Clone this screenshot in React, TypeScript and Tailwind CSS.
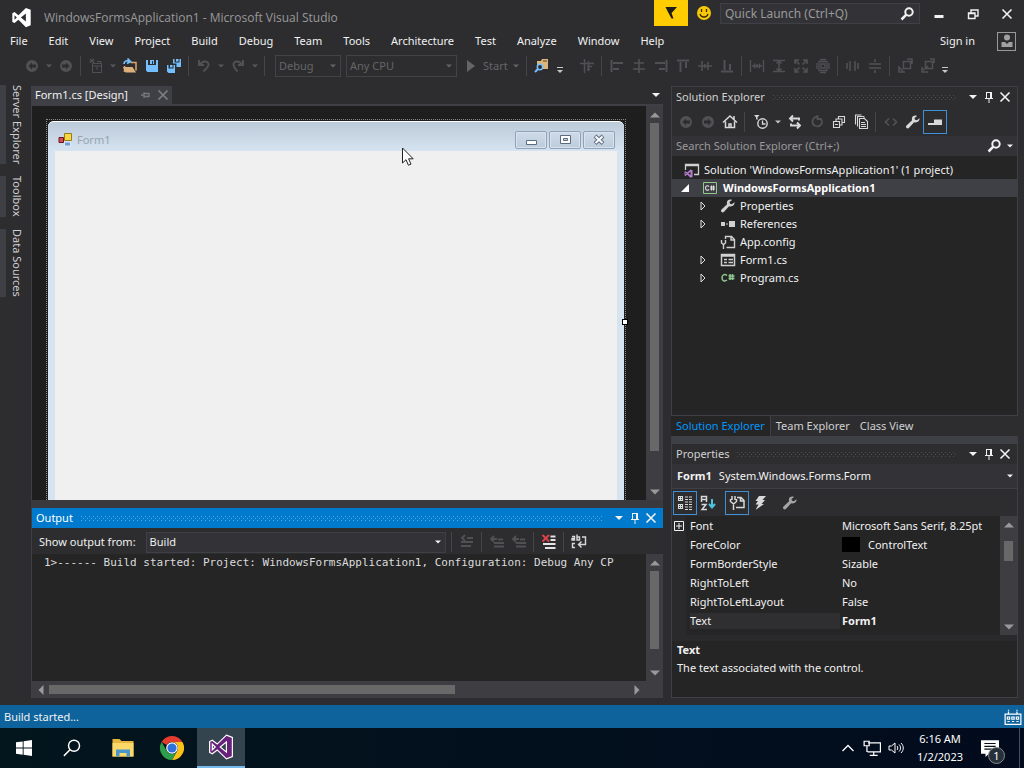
import { useState } from "react";
import type { ReactNode } from "react";
import clsx from "clsx";

type IconProps = { children: ReactNode; className?: string; box?: number };

function Icon({ children, className = "size-4", box = 16 }: IconProps) {
  return (
    <svg viewBox={`0 0 ${box} ${box}`} className={clsx("shrink-0", className)} fill="none" stroke="none" aria-hidden="true">
      {children}
    </svg>
  );
}

const VsMark = () => (
  <path fillRule="evenodd" d="M17 1l5.500 2.200v17.600L17 23 8.500 14.700 4 18.300l-2.500-1.300V7L4 5.700l4.500 3.600zM17 7.300L11.300 12l5.700 4.700zM4 9.300v5.400L6.700 12z" />
);

const Caret = ({ className = "size-2" }: { className?: string }) => (
  <Icon box={8} className={className}><path d="M0 2h8L4 6z" fill="currentColor" /></Icon>
);
const CloseGlyph = () => (
  <Icon className="size-4"><path d="M3.500 3.500l9 9m0-9l-9 9" stroke="currentColor" strokeWidth="1.600" /></Icon>
);
const PinGlyph = () => (
  <Icon><path d="M5.500 3v6m5-6v6M5 3.500h6M4 9.500h8M8 10v4M9.500 3v6" stroke="currentColor" /></Icon>
);
const WrenchGlyph = () => (
  <path d="M14.500 4.300l-2.600 1.900-1.900-.4-.5-1.900L12 2c-2-.9-4.300-.2-5 1.700-.3.900-.2 1.700.1 2.500L1.500 11.500c-.8.900-.6 2 .1 2.600.8.700 1.800.5 2.500-.3l5-5.600c2.900 1 5.900-1.200 5.400-3.900z" fill="currentColor" />
);
const SearchGlyph = () => (
  <Icon><circle cx="10" cy="6" r="3.700" stroke="currentColor" strokeWidth="2" /><path d="M7.300 8.700L2.500 13.500" stroke="currentColor" strokeWidth="2.500" /></Icon>
);

const icons = {
  back: <path fillRule="evenodd" d="M8 2a6 6 0 100 12A6 6 0 008 2zM8 4.500v2h4v3H8v2L4.500 8z" fill="currentColor" />,
  forward: <path fillRule="evenodd" d="M8 2a6 6 0 110 12A6 6 0 018 2zM8 4.500v2H4v3h4v2L11.500 8z" fill="currentColor" />,
  newProject: <path d="M4.500 5.500h9v9h-9zM4.500 8h9M4 .5v4M1.500 3h5M2 1l4 4m0-4L2 5M9 3.500h4v2M9 8v4" stroke="currentColor" />,
  open: (
    <>
      <path d="M8.500 4.500h5.500v8M2.500 8v6" stroke="#d9a867" strokeWidth="1.500" />
      <path d="M1 9h9.500l3.500 5.500H3.500z" fill="#dcb07a" />
      <path d="M2 6c0-3 3-4 6-2.500M5.500 .5l3 3-3.500 2" stroke="#75bfff" strokeWidth="1.700" />
    </>
  ),
  save: <path fillRule="evenodd" d="M2 2h2v5h8V2h2v12H3.500L2 12.500zM6 2h4v4H9V3H8v3H6z" fill="#75bfff" />,
  saveAll: (
    <>
      <path fillRule="evenodd" d="M7 1h1.500v3.500h5V1H15v8h-4.500V5.500H7zM10 1h2.500v2.500H10z" fill="#75bfff" />
      <path fillRule="evenodd" d="M1 7h1.500v3.500h5V7H9v8H2.500L1 13.500zM4 7h2.500v2.500H4z" fill="#75bfff" />
    </>
  ),
  undo: <path d="M3 2v5h5M4 6.500C7 2 13 3 12.500 7c-.3 2.500-3 4-5 6.500" stroke="currentColor" strokeWidth="2" />,
  redo: <path d="M13 2v5H8M12 6.500C9 2 3 3 3.500 7c.3 2.500 2 4 4 6.500" stroke="currentColor" strokeWidth="2" />,
  find: (
    <>
      <path d="M3 3h4l1-2h6v10H3z" fill="#dcb67a" />
      <path d="M9 3h4" stroke="#5a4420" />
      <circle cx="6" cy="9" r="2.700" fill="#2d2d30" stroke="#75bfff" strokeWidth="1.500" />
      <path d="M4 11l-3 3" stroke="#75bfff" strokeWidth="2" />
    </>
  ),
  snap: <path d="M1 5.500h14M5.500 1v14M8 8.500h5M8 11.500h3M9.500 3v10" stroke="currentColor" strokeWidth="1.500" />,
  alignLeft: <path d="M2.500 2v12M4 5h10M4 11h6" stroke="currentColor" strokeWidth="2" />,
  alignCenter: <path d="M8 1v14M3 5h10M2 11h12" stroke="currentColor" strokeWidth="1.600" />,
  alignRight: <path d="M13.500 2v12M2 5h10M6 11h6" stroke="currentColor" strokeWidth="2" />,
  alignTop: <path d="M2 2.500h12M5.500 4v10M11 4v6" stroke="currentColor" strokeWidth="2" />,
  alignMiddle: <path d="M1 8h14M5 3v10M11 4v8M8 6v4" stroke="currentColor" strokeWidth="1.600" />,
  alignBottom: <path d="M2 13.500h12M5.500 2v10M11 6v6" stroke="currentColor" strokeWidth="2" />,
  sameWidth: <path d="M1.500 2v12m13-12v12M3 8h10M5.500 5.500v5m5-5v5M8 6v4" stroke="currentColor" strokeWidth="1.400" />,
  sameHeight: <path d="M2 2.500h12m-12 11h12M8 3v10M5.500 5.500L8 3l2.500 2.500m-5 5L8 13l2.500-2.500" stroke="currentColor" strokeWidth="1.500" />,
  sameSize: <path d="M2 6V2h4m4 0h4v4m0 4v4h-4m-4 0H2v-4M3 3l3.500 3.500M13 3L9.500 6.500M3 13l3.500-3.500M13 13L9.500 9.500" stroke="currentColor" strokeWidth="1.600" />,
  sizeGrid: <path d="M4 3.500h8v9H4zM6 6h4v4H6zM2 5v6m12-6v6M5 1.500h6m-6 13h6" stroke="currentColor" strokeWidth="1.300" />,
  hSpace: <path d="M2 5v6m3-8v10m5-10v10m3-8v6" stroke="currentColor" strokeWidth="1.600" />,
  vSpace: <path d="M2 6h12m-12 4h12M8 1v3m0 8v3" stroke="currentColor" strokeWidth="1.600" />,
  toFront: <path d="M6.500 3.500h7v7h-7zM2 8v6h6M10 1h5v5M3 10l3 3" stroke="currentColor" strokeWidth="1.500" />,
  toBack: <path d="M6.500 3.500h7v7h-7zM3 9v5h6M9 8L4 12M11 1h4v4" stroke="currentColor" strokeWidth="1.500" />,
  home: <path d="M1 8.500L8 2l7 6.500M3.500 7.500v6h9v-6M12 2v3M7 14v-4h2v4" stroke="currentColor" strokeWidth="1.500" />,
  pending: (
    <>
      <circle cx="9.500" cy="9.500" r="4.700" stroke="currentColor" strokeWidth="1.400" />
      <path d="M9.500 6.500v3.500h3" stroke="currentColor" strokeWidth="1.300" />
      <path d="M1 1h5.500L4.500 3.200V6L3 5V3.200z" fill="currentColor" />
    </>
  ),
  sync: <path d="M6 1.500L3 4.500l3 3M3.500 4.500H12v2M10 8.500l3 3-3 3M12.500 11.500H4v-2" stroke="currentColor" strokeWidth="1.900" />,
  refresh: <path d="M9 3c-3-1-6 2-5.500 5.500S9 13.500 11.500 11 13 6 11 4.500M8.500 1v4h4" stroke="currentColor" strokeWidth="1.800" />,
  collapse: <path d="M2.500 7.500h6v6h-6zM4 10.500h3M5 7V5h6v6H9M7.500 4.500v-2h6v6h-2" stroke="currentColor" strokeWidth="1.100" />,
  showAll: <path d="M6.500 4.500h5l3 3v7h-8zM8 8.500h4m-4 2h5m-5 2h5M4.500 12.500v-10h6l1 1M2.500 10.500V1h6" stroke="currentColor" strokeWidth="1.100" />,
  code: <path d="M6 4.500L2.500 8 6 11.500m4-7L13.500 8 10 11.500" stroke="currentColor" strokeWidth="1.700" />,
  wrench: <WrenchGlyph />,
  preview: <path d="M1 9h7v2H1zM7 5.500h8V11H7z" fill="currentColor" />,
  categorized: <path d="M1.500 1.500h4v4h-4zM1.500 9.500h4v4h-4zM2 3.500h3m-1.500-1.500v3M2 11.500h3m-1.500-1.500v3M8 2h3m1 0h3M8 4.500h3m1 0h3M8 7h3m1 0h3M8 9.500h3m1 0h3M8 12h3m1 0h3M8 14.500h3m1 0h3" stroke="currentColor" strokeWidth="1.100" />,
  alphabetical: (
    <>
      <path d="M1.500 7V1.500h5V7M1.500 4.500h5M1.500 9.500H6L2 14.500h5" stroke="currentColor" strokeWidth="1.500" />
      <path d="M12 4v8M9 9l3 3.500L15 9" stroke="#4ec3e0" strokeWidth="2" />
    </>
  ),
  propPages: <path d="M3 1v4m3-4v4M1.500 4v2.500L4.500 9l3-2.500V4M4.500 8v7M8 2.500h4l3 3v7H7M11.500 2.500v3.500H15" stroke="currentColor" strokeWidth="1.500" />,
  events: <path d="M7 1h7l-3.500 4H13L9.500 9H12l-8.500 6 3-5.500H3.500L6 6H3.500z" fill="currentColor" />,
  outFind: <path d="M2 8h12M2 12h10M8 4h6M6 1L3 4l3 3" stroke="currentColor" strokeWidth="2" />,
  outPrev: <path d="M5 9h10M5 12.500h10M9 5.500h5M5 2L2 5l3 3M2 5h6" stroke="currentColor" strokeWidth="1.800" />,
  clear: (
    <>
      <path d="M9.500 2.500h5M9.500 6h5M2 10h12.500M4 14h10.500" stroke="#e4e4e4" strokeWidth="2" />
      <path d="M1.500 1l6.500 6.500m0-6.500L1.500 7.500" stroke="#e0404a" strokeWidth="1.800" />
    </>
  ),
  wrap: <path d="M1 2.500h2.500V6H1V4.500h2.500M6 .5V6h2.500V3H6M4 9.500H1.500v4H4M11 3h3.500v7.500H8M10.500 7.500l-3 3 3 3" stroke="currentColor" strokeWidth="1.400" />,
};

type IconName = keyof typeof icons;

function ToolButton({ name, label, tone = "dim", active }: { name: IconName; label: string; tone?: "dim" | "lit"; active?: boolean }) {
  return (
    <button
      aria-label={label}
      className={clsx(
        "flex h-[22px] w-[22px] shrink-0 items-center justify-center",
        tone === "dim" ? "text-[#515154]" : "text-[#d8d8d8]",
        active && "outline outline-[#3f8fd8]"
      )}
    >
      <Icon>{icons[name]}</Icon>
    </button>
  );
}

const Sep = () => <div className="mr-1 ml-[3px] h-5 w-px shrink-0 border-l border-[#46464a]" />;
const SmallCaret = ({ lit }: { lit?: boolean }) => (
  <button aria-label="More options" className={clsx("flex w-3 shrink-0 justify-center", lit ? "text-[#c0c0c0]" : "text-[#59595c]")}>
    <Caret className="size-[6px]" />
  </button>
);
const Overflow = () => (
  <button aria-label="Toolbar options" className="mt-2 flex w-[14px] shrink-0 justify-center text-[#c8c8c8]">
    <Icon box={8} className="size-2"><path d="M1 1.500h6" stroke="currentColor" /><path d="M1 4h6L4 7z" fill="currentColor" /></Icon>
  </button>
);

function DropDown({ label, value, className }: { label: string; value: string; className: string }) {
  return (
    <div className={clsx("relative flex shrink-0 items-center border", className)}>
      <select aria-label={label} className="h-full w-full appearance-none bg-transparent pl-[3px] outline-none">
        <option>{value}</option>
      </select>
      <span className="pointer-events-none absolute right-1"><Caret className="size-[6px]" /></span>
    </div>
  );
}

function Grip({ blue }: { blue?: boolean }) {
  return (
    <div
      className={clsx(
        "h-[5px] flex-1 [mask-image:conic-gradient(from_0deg_at_1px_1px,transparent_75%,#000_0),conic-gradient(from_0deg_at_1px_1px,transparent_75%,#000_0)] [mask-position:0_0,2px_2px] [mask-size:4px_4px]",
        blue ? "bg-[#59a8de]" : "bg-[#4a4a4f]"
      )}
    />
  );
}

function PanelHeader({ title, blue }: { title: string; blue?: boolean }) {
  return (
    <div className={clsx("flex h-5 shrink-0 items-center gap-2 pr-1 pl-1", blue ? "bg-[#007acc] text-white" : "text-[#d0d0d0]")}>
      <h2>{title}</h2>
      <Grip blue={blue} />
      <div className="flex items-center text-[#f1f1f1]">
        <button aria-label={`${title} window position`} className="flex w-4 justify-center"><Caret /></button>
        <button aria-label={`Auto hide ${title}`} className="flex w-4 justify-center"><PinGlyph /></button>
        <button aria-label={`Close ${title}`} className="flex w-4 justify-center"><CloseGlyph /></button>
      </div>
    </div>
  );
}

function VScroll({ thumb, className }: { thumb: string; className?: string }) {
  return (
    <div className={clsx("flex w-[17px] shrink-0 flex-col items-center bg-[#3e3e42] text-[#999]", className)}>
      <div className="flex h-[17px] items-center"><Caret className="size-[10px] rotate-180" /></div>
      <div className="flex min-h-0 w-full flex-1 flex-col items-center">
        <div className={clsx("w-[9px] bg-[#686868]", thumb)} />
      </div>
      <div className="flex h-[17px] items-center"><Caret className="size-[10px]" /></div>
    </div>
  );
}

const menus = ["File", "Edit", "View", "Project", "Build", "Debug", "Team", "Tools", "Architecture", "Test", "Analyze", "Window", "Help"];

function TitleBar() {
  return (
    <header className="flex h-[30px] shrink-0 items-start">
      <div className="flex flex-1 items-center gap-3 pt-[7px] pl-[11px]">
        <Icon box={24} className="size-[21px] text-white"><g fill="currentColor"><VsMark /></g></Icon>
        <h1 className="font-['Open_Sans','Noto_Sans',sans-serif] text-xs text-[#999]">WindowsFormsApplication1 - Microsoft Visual Studio</h1>
      </div>
      <button aria-label="Notifications" className="flex h-[26px] w-[34px] items-center justify-center bg-[#ffcc00] text-[#1b1b1b]">
        <Icon><path d="M2.500 2H14l-4 4.500-1.500 1.500 2 5.500h-2L5.500 8z" fill="currentColor" /></Icon>
      </button>
      <button aria-label="Send feedback" className="flex h-[26px] w-[32px] items-center justify-center">
        <Icon>
          <circle cx="8" cy="8" r="7" fill="#f8c808" />
          <path d="M4 9c1 4 7 4 8 0M5.500 4v3m5-3v3" stroke="#3a2d00" strokeWidth="1.300" />
        </Icon>
      </button>
      <div className="mt-[3px] flex h-[21px] w-[200px] items-center border border-[#3f3f46] bg-[#333337] px-1 text-[#f1f1f1]">
        <input aria-label="Quick Launch" placeholder="Quick Launch (Ctrl+Q)" className="w-0 flex-1 bg-transparent text-xs outline-none placeholder:text-[#999]" />
        <SearchGlyph />
      </div>
      <div className="ml-[2px] flex h-[28px] text-[#f1f1f1]">
        <button aria-label="Minimize" className="flex w-[34px] items-center justify-center"><Icon><path d="M3.500 9h9v3h-9z" fill="currentColor" /></Icon></button>
        <button aria-label="Restore" className="flex w-[34px] items-center justify-center"><Icon><path d="M3.500 7h6.500v5.500H3.500zM6 6.500V4h7v6h-2.500M3 7.500h7M6 4h7" stroke="currentColor" strokeWidth="1.400" /></Icon></button>
        <button aria-label="Close" className="flex w-[34px] items-center justify-center"><CloseGlyph /></button>
      </div>
    </header>
  );
}

function MenuBar() {
  return (
    <nav className="flex h-[22px] shrink-0 items-center gap-px pr-2">
      {menus.map((m) => (
        <button key={m} className="px-[10px] whitespace-nowrap">{m}</button>
      ))}
      <button className="ml-auto pr-[21px]">Sign in</button>
      <button aria-label="Account" className="flex size-[19px] items-center justify-center border border-[#999] text-[#a0a0a0]">
        <Icon><circle cx="8" cy="4.500" r="3" fill="currentColor" /><path d="M2.500 9H6l2 2 2-2h3.500v5h-11z" fill="currentColor" /></Icon>
      </button>
    </nav>
  );
}

function ToolBar() {
  return (
    <div className="flex h-[27px] shrink-0 items-center pl-[21px]">
      <ToolButton name="back" label="Navigate backward" /><SmallCaret />
      <ToolButton name="forward" label="Navigate forward" /><Sep />
      <ToolButton name="newProject" label="New project" /><SmallCaret />
      <ToolButton name="open" label="Open file" />
      <ToolButton name="save" label="Save" />
      <ToolButton name="saveAll" label="Save all" /><Sep />
      <ToolButton name="undo" label="Undo" /><SmallCaret />
      <ToolButton name="redo" label="Redo" /><SmallCaret /><Sep />
      <DropDown label="Solution configuration" value="Debug" className="ml-[6px] h-[22px] w-[66px] border-[#434346] text-[#656565]" />
      <DropDown label="Solution platform" value="Any CPU" className="ml-[5px] h-[22px] w-[111px] border-[#434346] text-[#656565]" />
      <button className="mr-1 ml-[6px] flex w-[56px] items-center gap-1 text-[#656565]">
        <Icon><path d="M4 2l8 6-8 6z" fill="currentColor" /></Icon>
        Start
        <Caret className="ml-auto size-[6px]" />
      </button>
      <Sep />
      <ToolButton name="find" label="Find in files" /><Overflow />
      <div className="w-[9px] shrink-0" />
      <ToolButton name="snap" label="Align to grid" /><Sep />
      <ToolButton name="alignLeft" label="Align lefts" />
      <ToolButton name="alignCenter" label="Align centers" />
      <ToolButton name="alignRight" label="Align rights" />
      <ToolButton name="alignTop" label="Align tops" />
      <ToolButton name="alignMiddle" label="Align middles" />
      <ToolButton name="alignBottom" label="Align bottoms" /><Sep />
      <ToolButton name="sameWidth" label="Make same width" />
      <ToolButton name="sameHeight" label="Make same height" />
      <ToolButton name="sameSize" label="Make same size" />
      <ToolButton name="sizeGrid" label="Size to grid" /><Sep />
      <ToolButton name="hSpace" label="Make horizontal spacing equal" />
      <ToolButton name="vSpace" label="Make vertical spacing equal" /><Sep />
      <ToolButton name="toFront" label="Bring to front" />
      <ToolButton name="toBack" label="Send to back" /><Overflow />
    </div>
  );
}

function SideRail() {
  return (
    <aside className="flex w-[31px] shrink-0 flex-col gap-3 pt-[6px]">
      {["Server Explorer", "Toolbox", "Data Sources"].map((t) => (
        <button key={t} className="flex w-6 items-center border-l-[6px] border-[#3f3f46] pl-[3px] leading-[14px] text-[#d0d0d0] [writing-mode:vertical-rl]">
          {t}
        </button>
      ))}
    </aside>
  );
}

function FormButton({ label, children }: { label: string; children: ReactNode }) {
  return (
    <button aria-label={label} className="flex h-[18px] w-8 items-center justify-center rounded-[2px] border border-[#8fa3b8] bg-linear-to-b from-[#cfdbe7] to-[#bccbdb] shadow-[inset_0_0_0_1px_#d8e3ee]">
      <Icon>{children}</Icon>
    </button>
  );
}

function Designer() {
  return (
    <section className="flex min-h-0 flex-1 flex-col border-l border-[#3f3f46]">
      <div className="flex h-[18px] shrink-0 items-center">
        <div className="flex h-full items-center bg-[#3f3f46] pl-[3px]">
          <span className="text-[#f1f1f1]">Form1.cs [Design]</span>
          <button aria-label="Pin tab" className="ml-[10px] text-[#77777b]"><Icon><path d="M3 8h3m0-3v6m0-4.500h5v3H6" stroke="currentColor" strokeWidth="1.300" /></Icon></button>
          <button aria-label="Close tab" className="mx-px text-[#808084]"><CloseGlyph /></button>
        </div>
        <button aria-label="Open documents" className="mr-[3px] ml-auto"><Caret /></button>
      </div>
      <div className="h-[2px] shrink-0 bg-[#3f3f46]" />
      <div className="flex min-h-0 flex-1 bg-[#1e1e1e]">
        <div className="relative flex min-w-0 flex-1 overflow-hidden pt-[13px] pr-5 pl-[14px]">
          <div className="relative flex flex-1 border border-b-0 border-dotted border-[#8a8a8a] p-px pb-0">
            <div className="flex flex-1 flex-col rounded-t-md bg-linear-to-r from-[#d6e3f1] via-[#dce8f4] to-[#d6e3f1]">
              <div className="flex h-[30px] shrink-0 items-center rounded-t-md border-t border-white bg-linear-to-b from-[#bccbd9] to-[#d6e3f1] px-[9px] pt-[6px]">
                <Icon>
                  <path d="M7.500 1.500h7v7h-7z" fill="#f5d742" stroke="#9a7a1c" />
                  <path d="M2 5.500h4.500v5H2z" fill="#d0505a" stroke="#6e1518" />
                  <path d="M7.500 10h6v4h-6z" fill="#6f9bd8" stroke="#dfe8f5" />
                </Icon>
                <span className="ml-1 text-[#98a4b0]">Form1</span>
                <div className="ml-auto flex gap-[2px]">
                  <FormButton label="Form minimize"><path d="M3.500 8.500h10v4h-10z" fill="#fff" stroke="#5b6b80" /></FormButton>
                  <FormButton label="Form maximize"><path d="M3.500 3.500h10v8h-10z" fill="#fff" stroke="#5b6b80" /><path d="M6.500 6.500h4v2h-4z" fill="#c5d2e0" stroke="#5b6b80" /></FormButton>
                  <FormButton label="Form close"><path d="M4 4l8 7.500m0-7.500L4 11.500" stroke="#5b6b80" strokeWidth="4" /><path d="M4.500 4.500l7 6.500m0-6.500l-7 6.500" stroke="#fff" strokeWidth="2" /></FormButton>
                </div>
              </div>
              <div className="mx-[7px] flex-1 bg-[#f0f0f0]" />
            </div>
            <span className="absolute top-[199px] -right-[3px] size-[6px] border border-black bg-white" />
            <svg viewBox="0 0 14 20" className="absolute top-[27px] left-[354px] h-5 w-[14px]" aria-hidden="true">
              <path d="M1.500 1v15l3.500-3.300 2.400 5.500 2.600-1.100L7.600 11.800h4.600z" fill="#fff" stroke="#222" />
            </svg>
          </div>
        </div>
        <VScroll thumb="h-full max-h-[328px]" />
      </div>
    </section>
  );
}

function Output() {
  return (
    <section className="flex h-[190px] shrink-0 flex-col border-l border-[#3f3f46]">
      <PanelHeader title="Output" blue />
      <div className="flex h-[26px] shrink-0 items-center pt-[2px]">
        <span className="pr-[10px] pl-[7px] whitespace-nowrap">Show output from:</span>
        <DropDown label="Show output from" value="Build" className="h-[21px] w-[300px] border-[#3f3f46] bg-[#333337] text-[#f1f1f1]" />
        <span className="w-[2px]" />
        <Sep /><ToolButton name="outFind" label="Find message in code" />
        <Sep /><ToolButton name="outPrev" label="Previous message" />
        <ToolButton name="outPrev" label="Next message" />
        <Sep /><ToolButton name="clear" label="Clear all" tone="lit" />
        <Sep /><ToolButton name="wrap" label="Toggle word wrap" tone="lit" />
      </div>
      <div className="flex min-h-0 flex-1 bg-[#252526]">
        <pre className="min-w-0 flex-1 overflow-hidden pl-3 font-['DejaVu_Sans_Mono',monospace] leading-[18px] text-[#dcdcdc]">
          1&gt;------ Build started: Project: WindowsFormsApplication1, Configuration: Debug Any CP
        </pre>
        <VScroll thumb="h-[78px]" />
      </div>
      <div className="flex h-[17px] shrink-0 items-center bg-[#3e3e42] pr-[21px] pl-1 text-[#999]">
        <Caret className="size-[10px] rotate-90" />
        <div className="mx-[3px] flex-1"><div className="h-[9px] w-[70%] bg-[#686868]" /></div>
        <Caret className="size-[10px] -rotate-90" />
      </div>
    </section>
  );
}

const tree: { label: string; icon: ReactNode; arrow?: boolean }[] = [
  { label: "Properties", arrow: true, icon: <WrenchGlyph /> },
  { label: "References", arrow: true, icon: <path d="M1 6h4v4H1zM6 7.500h2v1H6zM9 5h6v6H9z" fill="currentColor" /> },
  { label: "App.config", icon: <path d="M5.500 5V2.500h6l3 3v8h-8M11 2.500v3.500h3.500M1.500 6v3l2 1.500L5.500 9V6M3.500 10v5" stroke="currentColor" strokeWidth="1.400" /> },
  { label: "Form1.cs", arrow: true, icon: <path d="M1.500 2.500h13v11h-13zM2 4h12M4 7.500h3M8.500 7.500H13M4 10.500h3M8.500 10.500H13" stroke="currentColor" strokeWidth="1.500" /> },
  {
    label: "Program.cs",
    arrow: true,
    icon: <path d="M7 5.500C4.500 3.500 2 5 2 7.800S4.500 12 7 10M10 4v6m2.500-6v6M8.500 6h6m-6 2.500h6" stroke="#8fc98f" strokeWidth="1.500" />,
  },
];

function SolutionExplorer() {
  const [tab, setTab] = useState("Solution Explorer");
  return (
    <section className="flex min-h-0 flex-1 flex-col">
      <div className="flex min-h-0 flex-1 flex-col border border-[#3f3f46]">
        <PanelHeader title="Solution Explorer" />
        <div className="flex h-[29px] shrink-0 items-center pl-[3px]">
          <ToolButton name="back" label="Back" />
          <ToolButton name="forward" label="Forward" />
          <ToolButton name="home" label="Home" tone="lit" />
          <Sep />
          <span className="w-px" />
          <ToolButton name="pending" label="Pending changes filter" tone="lit" /><SmallCaret lit />
          <ToolButton name="sync" label="Sync with active document" tone="lit" />
          <ToolButton name="refresh" label="Refresh" />
          <ToolButton name="collapse" label="Collapse all" tone="lit" />
          <ToolButton name="showAll" label="Show all files" tone="lit" />
          <Sep />
          <ToolButton name="code" label="View code" />
          <ToolButton name="wrench" label="Properties" tone="lit" />
          <ToolButton name="preview" label="Preview selected items" tone="lit" active />
        </div>
        <div className="flex h-5 shrink-0 items-center bg-[#333337] pr-1 pl-1">
          <input aria-label="Search Solution Explorer" placeholder="Search Solution Explorer (Ctrl+;)" className="w-0 flex-1 bg-transparent outline-none placeholder:text-[#999]" />
          <SearchGlyph />
          <Caret className="ml-[5px] size-[6px]" />
        </div>
        <ul className="min-h-0 flex-1 bg-[#252526] pt-[5px] leading-[18px]">
          <li className="flex h-[18px] items-center gap-1 pl-[12px] whitespace-nowrap">
            <Icon>
              <path d="M1.500 8V2.500h13v10H10M1 3.500h14" stroke="#d0d0d0" strokeWidth="1.300" />
              <g transform="translate(0 7) scale(.38)" fill="#b57fd0"><VsMark /></g>
            </Icon>
            Solution 'WindowsFormsApplication1' (1 project)
          </li>
          <li className="flex h-[18px] items-center bg-[#3f3f46] pl-[9px] font-bold text-white">
            <Icon box={8} className="mr-[13px] size-2"><path d="M8 0v8H0z" fill="currentColor" /></Icon>
            <Icon className="mr-[5px] size-4">
              <path d="M1.500 2.500h13v11h-13z" stroke="#8fc98f" />
              <path d="M7 6.500C5 5 3.500 6 3.500 8S5 11 7 9.500M9.500 5.500v5m2-5v5M8 7h5m-5 2h5" stroke="#e0e0e0" strokeWidth="1.100" />
            </Icon>
            WindowsFormsApplication1
          </li>
          {tree.map((n) => (
            <li key={n.label} className="flex h-[18px] items-center pl-[26px]">
              <Icon box={10} className="mr-[12px] size-[10px]">{n.arrow && <path d="M3 1l4 4-4 4z" stroke="#e0e0e0" />}</Icon>
              <Icon className="mr-1 size-4 text-[#d0d0d0]">{n.icon}</Icon>
              {n.label}
            </li>
          ))}
        </ul>
      </div>
      <div className="flex h-5 shrink-0">
        {["Solution Explorer", "Team Explorer", "Class View"].map((t) => (
          <button
            key={t}
            onClick={() => setTab(t)}
            className={clsx("px-[5px] whitespace-nowrap", tab === t ? "border-r border-[#3f3f46] bg-[#252526] text-[#0097fb]" : "text-[#d0d0d0]")}
          >
            {t}
          </button>
        ))}
      </div>
    </section>
  );
}

const props = [
  { name: "Font", value: "Microsoft Sans Serif, 8.25pt", expand: true },
  { name: "ForeColor", value: "ControlText", swatch: true },
  { name: "FormBorderStyle", value: "Sizable" },
  { name: "RightToLeft", value: "No" },
  { name: "RightToLeftLayout", value: "False" },
  { name: "Text", value: "Form1", selected: true },
];

function Properties() {
  return (
    <section className="flex h-[255px] shrink-0 flex-col border border-[#3f3f46]">
      <PanelHeader title="Properties" />
      <button className="flex h-[25px] shrink-0 items-center border-b border-[#3f3f46] bg-[#333337] pr-1 pl-[5px]">
        <span className="font-bold">Form1</span>
        <span className="ml-[7px]">System.Windows.Forms.Form</span>
        <Caret className="ml-auto size-[6px]" />
      </button>
      <div className="flex h-[27px] shrink-0 items-center pl-[2px]">
        <ToolButton name="categorized" label="Categorized" tone="lit" active />
        <span className="w-[1px]" />
        <ToolButton name="alphabetical" label="Alphabetical" tone="lit" />
        <span className="w-[7px]" />
        <ToolButton name="propPages" label="Property list" tone="lit" active />
        <span className="w-[1px]" />
        <ToolButton name="events" label="Events" tone="lit" />
        <span className="ml-2 opacity-70"><ToolButton name="wrench" label="Property pages" tone="lit" /></span>
      </div>
      <div className="flex shrink-0 bg-[#252526]">
        <div className="min-w-0 flex-1 border-l-[14px] border-[#2a2a2c] pb-[5px]">
          <table className="-ml-[14px] w-full table-fixed border-collapse">
            <colgroup><col className="w-[168px]" /><col /></colgroup>
            <tbody>
              {props.map((p) => (
                <tr key={p.name} className="h-[19px]">
                  <td className="p-0">
                    <div className="flex items-center">
                      <span className="flex w-[18px] justify-start pl-[2px]">
                        {p.expand && <Icon box={10} className="size-[10px]"><path d="M.5.5h9v9h-9zM2 5h6M5 2v6" stroke="#f1f1f1" /></Icon>}
                      </span>
                      <span className={clsx("flex-1", p.selected && "bg-[#2f2f32]")}>{p.name}</span>
                    </div>
                  </td>
                  <td className="p-0 pl-[2px] whitespace-nowrap">
                    <div className="flex items-center">
                      {p.swatch && <span className="mr-2 h-[15px] w-[18px] bg-black" />}
                      <span className={clsx(p.selected && "font-bold")}>{p.value}</span>
                    </div>
                  </td>
                </tr>
              ))}
            </tbody>
          </table>
        </div>
        <VScroll thumb="mt-2 h-5" />
      </div>
      <div className="min-h-0 flex-1 border-t-[6px] border-[#2a2a2c] bg-[#252526] px-[5px] leading-[18px]">
        <p className="font-bold">Text</p>
        <p>The text associated with the control.</p>
      </div>
    </section>
  );
}

function TaskBar() {
  return (
    <footer className="flex h-10 shrink-0 bg-linear-to-r from-[#03151d] to-[#020b1d] text-white">
      <button aria-label="Start menu" className="flex w-12 items-center justify-center">
        <Icon><path d="M0 2.300L6.700 1.400V7.600H0zM7.600 1.200L16 0v7.600H7.600zM0 8.500h6.700v6.200L0 13.800zM7.600 8.500H16V16l-8.400-1.200z" fill="#fff" /></Icon>
      </button>
      <button aria-label="Search" className="flex w-12 items-center justify-center">
        <Icon className="size-[18px]"><circle cx="9.800" cy="6" r="4.900" stroke="#fff" strokeWidth="1.300" /><path d="M6.200 9.600L.8 15" stroke="#fff" strokeWidth="1.300" /></Icon>
      </button>
      <button aria-label="File Explorer" className="ml-[3px] flex w-12 items-center justify-center">
        <Icon box={24} className="size-6">
          <path d="M1.500 3h7l2 2H22.500v15.500h-21z" fill="#e6b63e" />
          <path d="M1.500 7h21v13.500h-21z" fill="#fbd968" />
          <path d="M5 20.500v-7h14v7h-3.500V17h-7v3.500z" fill="#4a96cc" />
        </Icon>
      </button>
      <button aria-label="Chrome" className="ml-px flex w-12 items-center justify-center">
        <Icon box={24} className="size-6">
          <path d="M1.600 6A12 12 0 0122.400 6H12a6 6 0 00-5.200 3z" fill="#e33b2e" />
          <path d="M22.400 6A12 12 0 0112 24l5.200-9A6 6 0 0012 6z" fill="#fbc116" />
          <path d="M1.600 6l5.200 9A6 6 0 0017.200 15L12 24A12 12 0 011.600 6z" fill="#2c9f48" />
          <circle cx="12" cy="12" r="5.800" fill="#fff" /><circle cx="12" cy="12" r="4.600" fill="#2f72de" />
        </Icon>
      </button>
      <button aria-label="Visual Studio" className="ml-px flex w-12 items-center justify-center border-b-2 border-[#76b9ed] bg-[#33444f]">
        <Icon box={24} className="size-[26px]"><g fill="#68217a" stroke="#fff" strokeWidth="1.100"><VsMark /></g></Icon>
      </button>
      <div className="ml-auto flex items-center">
        <button aria-label="Hidden icons" className="flex w-6 justify-center"><Icon><path d="M2.500 11L8 5.500 13.500 11" stroke="#fff" strokeWidth="1.300" /></Icon></button>
        <button aria-label="Network" className="flex w-6 justify-center"><Icon className="size-[18px]"><path d="M4.500 3.500h11v8H4M1 2h4.500v4H1zM3.500 6v5.500M9.500 11.500v3M6 14.500h7" stroke="#fff" strokeWidth="1.100" /></Icon></button>
        <button aria-label="Volume" className="flex w-6 justify-center"><Icon><path d="M1 6h2.500L7 3v10L3.500 10H1zM9 6c1 1 1 3 0 4M11 4.500c2 2 2 5 0 7M13 3c3 3 3 7 0 10" stroke="#fff" /></Icon></button>
        <div className="w-16 text-center leading-[18px]">
          <p>6:16 AM</p>
          <p>1/2/2023</p>
        </div>
        <button aria-label="Action center" className="relative mr-[11px] flex w-9 justify-center">
          <Icon className="size-[18px]"><path d="M0 1h16v12H7l-3 3v-3H0z" fill="#fff" /><path d="M3 4h10M3 6.500h10M3 9h7" stroke="#06111d" /></Icon>
          <span className="absolute top-2 left-4 flex size-[17px] items-center justify-center rounded-full border border-[#888] bg-[#26303a] leading-none">1</span>
        </button>
        <div className="mr-1 h-full w-px bg-[#44505c]" />
      </div>
    </footer>
  );
}

export default function App() {
  return (
    <div className="flex h-screen flex-col overflow-hidden bg-[#2d2d30] font-['Noto_Sans','Open_Sans',sans-serif] text-[11px] leading-4 text-[#f1f1f1]">
      <TitleBar />
      <MenuBar />
      <ToolBar />
      <div className="flex min-h-0 flex-1">
        <SideRail />
        <main className="flex min-w-0 flex-1 flex-col pt-[7px] pb-[7px]">
          <Designer />
          <div className="h-2 shrink-0 bg-[#3a3a3e]" />
          <Output />
        </main>
        <div className="ml-2 flex w-[347px] shrink-0 flex-col pt-[7px] pb-[7px]">
          <SolutionExplorer />
          <div className="h-[7px] shrink-0 bg-[#3f3f46]" />
          <Properties />
        </div>
        <div className="w-[6px] shrink-0" />
      </div>
      <div className="flex h-[23px] shrink-0 items-center justify-between bg-[#0e639c] pr-[2px] pl-1">
        <span>Build started...</span>
        <Icon className="size-[18px]"><path d="M1 5.500h14v9H1zM4 6V3m0-1.500v1M11.500 6V3m0-1.500v1M3 8h2v2H3zM7 8h2v2H7zM11 8h2v2h-2zM3 12h2m2 0h2m2 0h2" stroke="#fff" strokeWidth="1.100" /></Icon>
      </div>
      <TaskBar />
    </div>
  );
}
